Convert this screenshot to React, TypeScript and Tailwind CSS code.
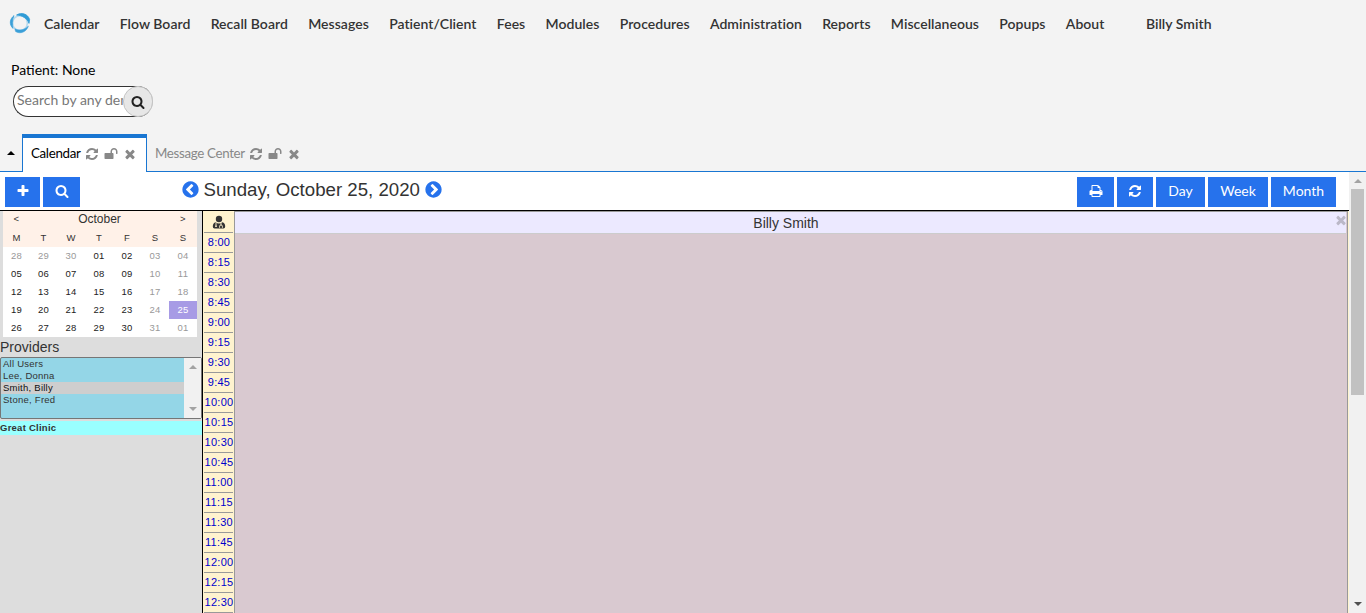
const PATHS = {
  refresh:
    "M1639 1056q0 5-1 7-64 268-268 434.5t-478 166.5q-146 0-282.5-55t-243.5-157l-129 129q-19 19-45 19t-45-19-19-45v-448q0-26 19-45t45-19h448q26 0 45 19t19 45-19 45l-137 137q71 66 161 102t187 36q134 0 250-65t186-179q11-17 53-117 8-23 30-23h192q13 0 22.5 9.5t9.5 22.5zm25-800v448q0 26-19 45t-45 19h-448q-26 0-45-19t-19-45 19-45l138-138q-148-137-349-137-134 0-250 65t-186 179q-11 17-53 117-8 23-30 23h-199q-13 0-22.5-9.5t-9.5-22.5v-7q65-268 270-434.5t480-166.5q146 0 284 55.5t245 156.5l130-129q19-19 45-19t45 19 19 45z",
  search:
    "M1216 832q0-185-131.5-316.5t-316.5-131.5-316.5 131.5-131.5 316.5 131.5 316.5 316.5 131.5 316.5-131.5 131.5-316.5zm512 832q0 52-38 90t-90 38q-54 0-90-38l-343-342q-179 124-399 124-143 0-273.5-55.5t-225-150-150-225-55.5-273.5 55.5-273.5 150-225 225-150 273.5-55.5 273.5 55.5 225 150 150 225 55.5 273.5q0 220-124 399l343 343q37 37 37 90z",
  times:
    "M1490 1322q0 40-28 68l-136 136q-28 28-68 28t-68-28l-294-294-294 294q-28 28-68 28t-68-28l-136-136q-28-28-28-68t28-68l294-294-294-294q-28-28-28-68t28-68l136-136q28-28 68-28t68 28l294 294 294-294q28-28 68-28t68 28l136 136q28 28 28 68t-28 68l-294 294 294 294q28 28 28 68z",
  plus:
    "M1600 736v192q0 40-28 68t-68 28h-416v416q0 40-28 68t-68 28h-192q-40 0-68-28t-28-68v-416h-416q-40 0-68-28t-28-68v-192q0-40 28-68t68-28h416v-416q0-40 28-68t68-28h192q40 0 68 28t28 68v416h416q40 0 68 28t28 68z",
  unlock:
    "M1728 576v256q0 26-19 45t-45 19h-64q-26 0-45-19t-19-45v-256q0-106-75-181t-181-75-181 75-75 181v192h96q40 0 68 28t28 68v576q0 40-28 68t-68 28h-960q-40 0-68-28t-28-68v-576q0-40 28-68t68-28h672v-192q0-185 131.5-316.5t316.5-131.5 316.5 131.5 131.5 316.5z",
  print:
    "M448 1536h896v-256h-896v256zm0-640h896v-384h-160q-40 0-68-28t-28-68v-160h-640v640zm1152 64q0-26-19-45t-45-19-45 19-19 45 19 45 45 19 45-19 19-45zm128 0v416q0 13-9.5 22.5t-22.5 9.5h-224v160q0 40-28 68t-68 28h-960q-40 0-68-28t-28-68v-160h-224q-13 0-22.5-9.5t-9.5-22.5v-416q0-79 56.5-135.5t135.5-56.5h64v-544q0-40 28-68t68-28h672q40 0 88 20t76 48l152 152q28 28 48 76t20 88v256h64q79 0 135.5 56.5t56.5 135.5z",
  circleLeft:
    "M1037 1395l102-102q19-19 19-45t-19-45l-307-307 307-307q19-19 19-45t-19-45l-102-102q-19-19-45-19t-45 19l-454 454q-19 19-19 45t19 45l454 454q19 19 45 19t45-19zm627-499q0 209-103 385.5t-279.5 279.5-385.5 103-385.5-103-279.5-279.5-103-385.5 103-385.5 279.5-279.5 385.5-103 385.5 103 279.5 279.5 103 385.5z",
};

function Icon({ name, className = "" }: { name: keyof typeof PATHS; className?: string }) {
  return (
    <svg viewBox="0 0 1792 1792" fill="currentColor" className={`shrink-0 ${className}`}>
      <path d={PATHS[name]} />
    </svg>
  );
}

function Logo() {
  return (
    <svg viewBox="0 0 22 22" className="size-[22px] shrink-0" fill="none">
      <circle cx="11" cy="11" r="7.4" stroke="#b4d9ee" strokeWidth="1.6" />
      <path d="M5 3.6C0.6 7.2 0 12.4 4 16.4C2.9 12.4 3 8 5 3.6Z" fill="#3a9fd8" stroke="#3a9fd8" strokeWidth="0.8" />
      <path d="M7.6 3C12.6 0 18.6 1.8 20.6 7.4L20 11.4C18.4 6.4 13.4 3.4 7.6 3Z" fill="#2f9bd6" stroke="#2f9bd6" strokeWidth="0.8" />
      <path d="M19.4 14C17.6 20 11.4 22.4 6.6 19.6L5.8 16.8C10.4 19.2 15.6 18 19.4 14Z" fill="#3a9fd8" stroke="#3a9fd8" strokeWidth="0.5" />
    </svg>
  );
}

function Doctor() {
  return (
    <svg viewBox="0 0 14 14" className="mt-px size-[14px]">
      <circle cx="7" cy="4" r="3.2" fill="#333" />
      <path d="M3.6 7.2Q7 9.6 10.4 7.2Q13.2 8 13.2 11.6Q13.2 13.5 11.4 13.5H2.6Q0.8 13.5 0.8 11.6Q0.8 8 3.6 7.2Z" fill="#333" />
      <path d="M4 7.6V10.6M7.6 12.8V11.2Q7.6 10 9 10T10.4 11.2V12.8M9 10V7.6" stroke="#fff3cf" strokeWidth="0.9" fill="none" />
      <circle cx="4" cy="11.2" r="0.9" fill="#fff3cf" />
    </svg>
  );
}

const MENU = [
  "Calendar", "Flow Board", "Recall Board", "Messages", "Patient/Client", "Fees", "Modules",
  "Procedures", "Administration", "Reports", "Miscellaneous", "Popups", "About",
];

const WEEKS = [
  ["28", "29", "30", "01", "02", "03", "04"],
  ["05", "06", "07", "08", "09", "10", "11"],
  ["12", "13", "14", "15", "16", "17", "18"],
  ["19", "20", "21", "22", "23", "24", "25"],
  ["26", "27", "28", "29", "30", "31", "01"],
];

const TIMES = [
  "8:00", "8:15", "8:30", "8:45", "9:00", "9:15", "9:30", "9:45", "10:00", "10:15",
  "10:30", "10:45", "11:00", "11:15", "11:30", "11:45", "12:00", "12:15", "12:30",
];

function dayClass(week: number, day: number) {
  if (week === 3 && day === 6) return "bg-[#a79be5] text-white";
  if (day > 4 || (week === 0 && day < 3)) return "text-[#999]";
  return "text-[#222]";
}

function Tab({ label, active = false }: { label: string; active?: boolean }) {
  return (
    <div
      className={
        active
          ? "-mb-px flex h-[38px] w-[125px] items-center border-x border-t-4 border-[#1976d2] bg-white pb-[3px] pl-2 text-black"
          : "flex h-[37px] items-center pt-[2px] pl-2 text-[#888]"
      }
    >
      <span className="text-[13.33px] tracking-[-0.33px]">{label}</span>
      <Icon name="refresh" className="ml-[4.5px] size-[14px] text-[#888]" />
      <Icon name="unlock" className="ml-[5px] size-[14px] text-[#888]" />
      <Icon name="times" className="ml-[5px] size-[14px] text-[#888]" />
    </div>
  );
}

function Header() {
  return (
    <header className="flex h-[172px] flex-col border-b border-[#1976d2] bg-[#f3f3f3] text-[14px]">
      <nav className="flex h-[46px] items-center pl-[9px] font-semibold tracking-[0.035px] text-[#333]">
        <Logo />
        <div className="ml-[13px] flex gap-[20.3px]">
          {MENU.map((m) => (
            <span key={m}>{m}</span>
          ))}
        </div>
        <span className="ml-[41.5px]">Billy Smith</span>
      </nav>
      <div className="mt-[14px] h-5 pl-[11px] leading-5 text-black">Patient: None</div>
      <div className="mt-[6px] ml-[13px] flex h-[31px] w-[140px] rounded-full border border-[#333] border-r-[#bbb] bg-white">
        <input
          placeholder="Search by any demographics"
          className="w-[109px] shrink-0 pb-[5px] pl-[3px] outline-none placeholder:text-[#777]"
        />
        <button className="-mt-px flex h-[31px] w-[30px] shrink-0 items-center justify-center rounded-full border border-[#c4c4c4] bg-[#e7e7e7] text-[#222]">
          <Icon name="search" className="size-[14px]" />
        </button>
      </div>
      <div className="mt-auto flex items-end">
        <div className="flex h-[37px] w-[22px] items-center justify-center">
          <svg viewBox="0 0 8 4" className="h-1 w-2">
            <path d="M0 4L4 0L8 4Z" fill="#000" />
          </svg>
        </div>
        <Tab label="Calendar" active />
        <Tab label="Message Center" />
      </div>
    </header>
  );
}

function Toolbar() {
  const button = "flex h-[30px] items-center justify-center bg-[#2672ec] pb-[2px] text-white";
  return (
    <div className="flex h-[39px] items-center border-b border-black pt-px pl-[5px] pr-[13px] text-[14px]">
      <button className={`${button} w-[35px]`}>
        <Icon name="plus" className="size-[14px]" />
      </button>
      <button className={`${button} ml-[3px] w-[37px]`}>
        <Icon name="search" className="size-[14px]" />
      </button>
      <div className="ml-[101px] flex items-center pb-[4px]">
        <Icon name="circleLeft" className="size-[19px] text-[#2672ec]" />
        <span className="mr-[4px] ml-[3.5px] font-['Liberation_Sans',sans-serif] text-[18.67px] leading-6 text-[#333]">
          Sunday, October 25, 2020
        </span>
        <Icon name="circleLeft" className="size-[19px] -scale-x-100 text-[#2672ec]" />
      </div>
      <div className="ml-auto flex gap-[3px]">
        <button className={`${button} w-[37px]`}>
          <Icon name="print" className="size-[14px]" />
        </button>
        <button className={`${button} w-9`}>
          <Icon name="refresh" className="size-[14px]" />
        </button>
        <button className={`${button} w-[49px]`}>Day</button>
        <button className={`${button} w-[60px]`}>Week</button>
        <button className={`${button} w-[65px]`}>Month</button>
      </div>
    </div>
  );
}

function Arrow({ down = false, className = "" }: { down?: boolean; className?: string }) {
  return (
    <svg viewBox="0 0 8 4" className={`h-1 w-[8px] ${down ? "rotate-180" : ""} ${className}`}>
      <path d="M0 4L4 0L8 4Z" fill="currentColor" />
    </svg>
  );
}

function Sidebar() {
  const columns = "grid grid-cols-[27px_27px_repeat(5,28px)] text-center";
  return (
    <aside className="flex w-[202px] shrink-0 flex-col bg-[#ddd] text-[#333]">
      <div className="ml-[3px] w-[194px] bg-white text-[9.5px] tracking-[0.25px]">
        <div className="bg-[#fff1e8]">
          <div className={`${columns} h-[17px] items-center`}>
            <span>&lt;</span>
            <span className="col-span-5 text-[12px] leading-[17px] tracking-normal">October</span>
            <span>&gt;</span>
          </div>
          <div className={`${columns} h-[19px] leading-[20px]`}>
            {["M", "T", "W", "T", "F", "S", "S"].map((d, i) => (
              <span key={i}>{d}</span>
            ))}
          </div>
        </div>
        {WEEKS.map((w, r) => (
          <div key={r} className={`${columns} h-[18px] leading-[18px]`}>
            {w.map((d, c) => (
              <span key={c} className={dayClass(r, c)}>{d}</span>
            ))}
          </div>
        ))}
      </div>
      <div className="h-[20px] text-[14px] leading-[21px]">Providers</div>
      <div className="flex h-[62px] rounded-[2px] border border-[#767676] bg-[#94d6e7] text-[9.5px] leading-3 tracking-[0.25px]">
        <div className="flex-1">
          <div className="pl-[2px]">All Users</div>
          <div className="pl-[2px]">Lee, Donna</div>
          <div className="bg-[#cecece] pl-[2px] text-[#101010]">Smith, Billy</div>
          <div className="pl-[2px]">Stone, Fred</div>
        </div>
        <div className="flex w-[17px] flex-col items-center justify-between bg-[#f1f1f1] py-[7px] text-[#a3a3a3]">
          <Arrow />
          <Arrow down />
        </div>
      </div>
      <div className="mt-[2px] h-[14px] bg-[#9ff] text-[9.5px] leading-[14px] font-bold tracking-[0.25px]">
        Great Clinic
      </div>
    </aside>
  );
}

function Schedule() {
  return (
    <main className="flex min-w-0 flex-1 border-l border-black bg-[#fff3cf]">
      <div className="w-[31px] shrink-0 px-px text-center text-[11px] tracking-[0.25px]">
        <div className="flex h-[22px] items-center justify-center border-b border-[#999]">
          <Doctor />
        </div>
        {TIMES.map((t) => (
          <div key={t} className="flex h-5 items-center justify-center border-b border-[#999] pl-[1px] text-[#00c]">
            {t}
          </div>
        ))}
      </div>
      <div className="mr-px flex flex-1 flex-col border-x border-t border-[#999] bg-[#d9c9d0] pr-px">
        <div className="relative flex h-[22px] items-center justify-center border-b border-[#ccc] bg-[#ece9ff] pt-[2px] pr-[9px] text-[14px] text-[#333]">
          Billy Smith
          <Icon name="times" className="absolute top-[1px] -right-[2px] size-[14px] text-[#bbb8c8]" />
        </div>
      </div>
    </main>
  );
}

export default function App() {
  return (
    <div className="flex h-[613px] w-[1366px] flex-col overflow-hidden bg-white font-['Lato',sans-serif]">
      <Header />
      <div className="flex min-h-0 flex-1">
        <div className="flex min-w-0 flex-1 flex-col">
          <Toolbar />
          <div className="flex min-h-0 flex-1 overflow-hidden font-['Liberation_Sans',sans-serif]">
            <Sidebar />
            <Schedule />
          </div>
        </div>
        <div className="flex w-[17px] flex-col items-center bg-[#f1f1f1] pt-[7px] pb-[7px]">
          <Arrow className="text-[#a3a3a3]" />
          <div className="mt-[6px] h-[206px] w-[13px] bg-[#c1c1c1]" />
          <Arrow down className="mt-auto text-[#505050]" />
        </div>
      </div>
    </div>
  );
}
